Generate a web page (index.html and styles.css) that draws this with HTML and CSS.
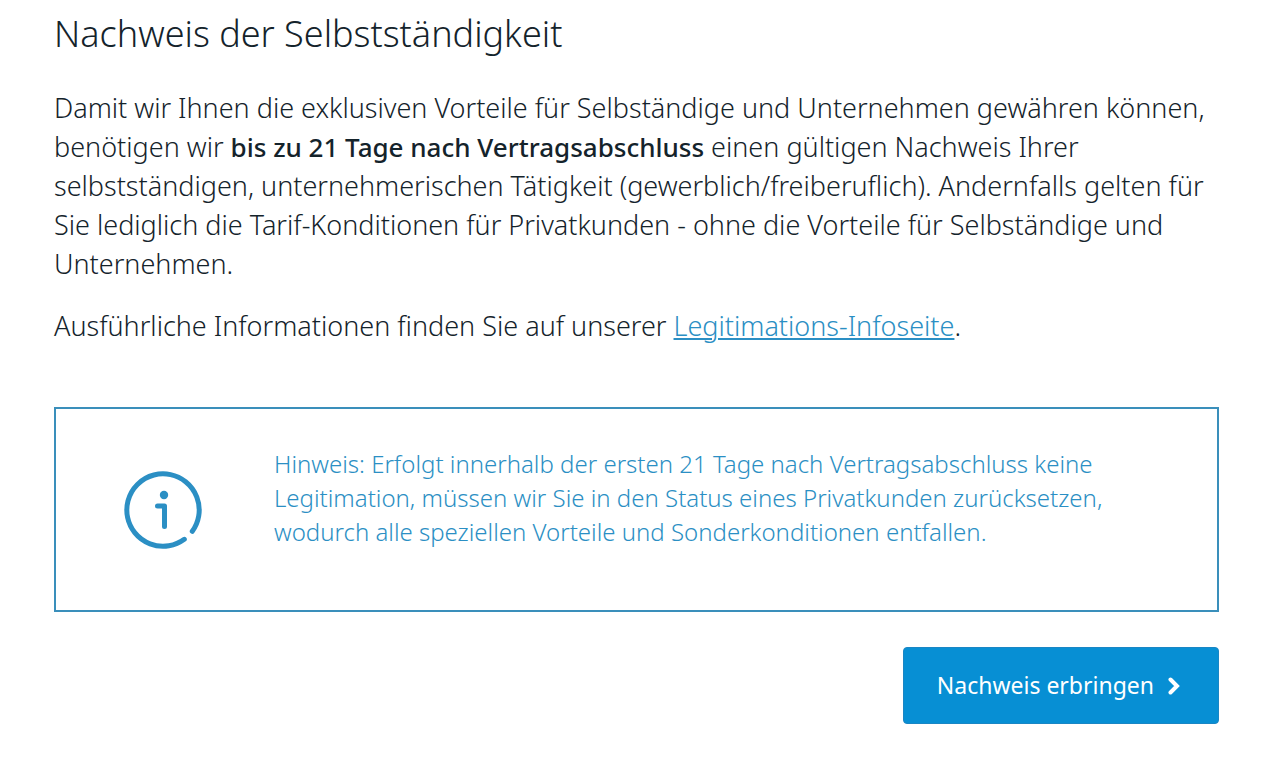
FILE: index.html
```html
<!DOCTYPE html>
<html lang="de">
<head>
<meta charset="utf-8">
<meta name="viewport" content="width=device-width, initial-scale=1">
<title>Nachweis der Selbstständigkeit</title>
<link rel="stylesheet" href="styles.css">
</head>
<body>
<main class="page">
  <h1 class="title">Nachweis der Selbstständigkeit</h1>
  <p class="text">Damit wir Ihnen die exklusiven Vorteile für Selbständige und Unternehmen gewähren können, benötigen wir <strong>bis zu 21 Tage nach Vertragsabschluss</strong> einen gültigen Nachweis Ihrer selbstständigen, unternehmerischen Tätigkeit (gewerblich/freiberuflich). Andernfalls gelten für Sie lediglich die Tarif-Konditionen für Privatkunden - ohne die Vorteile für Selbständige und Unternehmen.</p>
  <p class="text">Ausführliche Informationen finden Sie auf unserer <a class="link" href="#">Legitimations-Infoseite</a>.</p>
  <aside class="notice">
    <svg class="notice-icon" viewBox="0 0 80 80" aria-hidden="true">
      <path d="M61.3 69.3A36.2 36.2 0 1 1 69.3 61.3"/>
      <path d="M34.5 36h7v20.5"/>
      <circle cx="41" cy="25" r="4.2"/>
    </svg>
    <p class="notice-text">Hinweis: Erfolgt innerhalb der ersten 21 Tage nach Vertragsabschluss keine Legitimation, müssen wir Sie in den Status eines Privatkunden zurücksetzen, wodurch alle speziellen Vorteile und Sonderkonditionen entfallen.</p>
  </aside>
  <div class="actions">
    <button class="button" type="button">Nachweis erbringen
      <svg class="chevron" viewBox="0 0 12 18" aria-hidden="true"><path d="M2.5 2.5L9 9l-6.500 6.500"/></svg>
    </button>
  </div>
</main>
</body>
</html>
```
FILE: styles.css
```css
* {
  box-sizing: border-box;
}

body {
  margin: 0;
  background: #fff;
  color: #14232b;
  font-family: "Noto Sans", "Open Sans", sans-serif;
  font-weight: 300;
}

.page {
  padding: 7px 61px 56px 54px;
}

.title {
  margin: 0 0 27px;
  font-size: 36px;
  line-height: 54px;
  font-weight: 300;
}

.text {
  margin: 0 0 23px;
  font-size: 27px;
  line-height: 39px;
}

.text strong {
  font-size: 26px;
  line-height: 1;
  font-weight: 500;
}

.link {
  color: #2b8fc4;
  text-decoration-thickness: 2px;
  text-underline-offset: 2px;
}

.notice {
  display: flex;
  align-items: flex-start;
  gap: 71px;
  margin-top: 62px;
  padding: 38px 68px 60px 67px;
  border: 2px solid #3a8fbb;
  color: #2b8fc4;
}

.notice-icon {
  flex: none;
  width: 80px;
  height: 80px;
  margin-top: 23px;
  fill: none;
  stroke: #2b8fc4;
  stroke-width: 5;
  stroke-linecap: round;
  stroke-linejoin: round;
}

.notice-icon circle {
  fill: #2b8fc4;
  stroke: none;
}

.notice-text {
  margin: 0;
  font-size: 24px;
  line-height: 34px;
}

.actions {
  display: flex;
  justify-content: flex-end;
  margin-top: 35px;
}

.button {
  display: flex;
  align-items: center;
  gap: 14px;
  padding: 19px 38px 20px 33px;
  border: 1px solid #1a86c4;
  border-radius: 4px;
  background: #078fd4;
  color: #fff;
  font-family: inherit;
  font-size: 23px;
  line-height: 36px;
  font-weight: 400;
}

.chevron {
  width: 12px;
  height: 18px;
  margin-top: 2px;
  fill: none;
  stroke: currentColor;
  stroke-width: 4;
  stroke-linecap: round;
}
```
